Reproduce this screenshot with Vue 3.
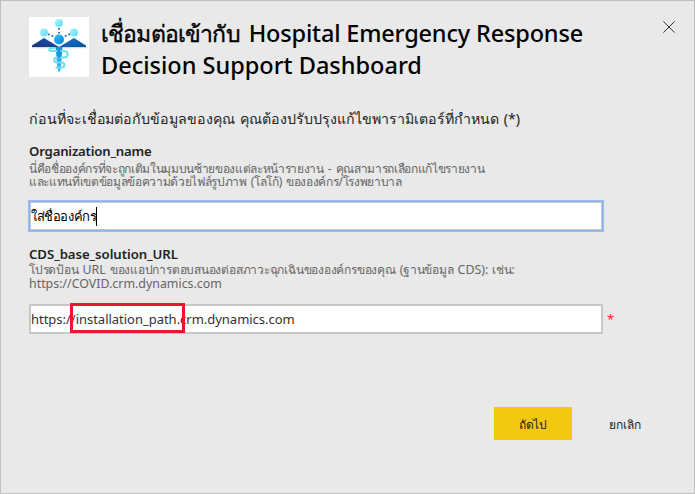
<script setup>
import { ref } from 'vue'
const organization = ref('ใส่ชื่อองค์กร')
const url = ref('https://installation_path.crm.dynamics.com')
</script>

<template>
  <main class="dialog">
    <header class="head">
      <svg class="logo" viewBox="0 0 60 60">
        <defs>
          <linearGradient id="wingL" x1="0" y1="1" x2="1" y2="0"><stop offset="0" stop-color="#1b2f7c" /><stop offset="1" stop-color="#1559ae" /></linearGradient>
          <linearGradient id="wingR" x1="0" y1="0" x2="1" y2="1"><stop offset="0" stop-color="#1275cc" /><stop offset="1" stop-color="#0b4f9c" /></linearGradient>
          <linearGradient id="ball" x1="0" y1="0" x2="1" y2="1"><stop offset="0" stop-color="#35c0f2" /><stop offset="1" stop-color="#0a83dc" /></linearGradient>
          <linearGradient id="pale" x1="0" y1="0" x2="1" y2="1"><stop offset="0" stop-color="#a5f5ff" /><stop offset="1" stop-color="#62d9f5" /></linearGradient>
          <linearGradient id="staff" x1="0" y1="0" x2="0" y2="1"><stop offset="0" stop-color="#168fe0" /><stop offset="1" stop-color="#42c3f4" /></linearGradient>
        </defs>
        <rect width="60" height="60" fill="#fff" />
        <path d="M3 30.500H57" stroke="#d5dbe3" stroke-width="1.500" />
        <path d="M26.500 30h7l-1.700 22-1.800 4-1.500-4z" fill="url(#staff)" />
        <path d="M25 31h-2c-3.500 0-3.500 3 0 3h11.500c5.500 0 5.500 6.500 0 6.500h-6.500c-3.500 0-3.500 5 0 5h4.500c4 0 4 5 0 5h-5" fill="none" stroke="#6fe0ef" stroke-width="2.200" stroke-linecap="round" />
        <path d="M28.300 30h3.400l-.6 11h-2z" fill="#1b92e2" />
        <path d="M3 30V28.500L15 21l15 9z" fill="url(#wingL)" />
        <path d="M57 30V28.500L45 21l-15 9z" fill="url(#wingR)" />
        <path d="M30 11v6M19 17l7 3M41 17l-7 3" stroke="#1260ac" stroke-width="1.700" stroke-dasharray="1.700 2.200" />
        <circle cx="30" cy="6" r="4" fill="url(#pale)" />
        <circle cx="15" cy="15.500" r="4" fill="url(#pale)" />
        <circle cx="45" cy="15.500" r="4" fill="url(#pale)" />
        <circle cx="30" cy="22.500" r="5" fill="url(#ball)" />
      </svg>
      <h1 class="title">
        <span class="row"><span class="t-th">เชื่อมต่อเข้ากับ</span><span class="t-en">Hospital Emergency Response</span></span>
        <span class="row"><span>Decision Support Dashboard</span></span>
      </h1>
      <svg class="close" viewBox="0 0 12 12"><path d="M.4.4l11.200 11.200M11.600.4L.4 11.600" stroke="#333" stroke-width="1" /></svg>
    </header>
    <p class="intro"><span class="i1">ก่อนที่จะเชื่อมต่อกับข้อมูลของคุณ</span><span>คุณต้องปรับปรุงแก้ไขพารามิเตอร์ที่กำหนด</span><span>(*)</span></p>
    <section class="param">
      <h2 class="name">Organization_name</h2>
      <p class="desc"><span class="th">นี่คือชื่อองค์กรที่จะถูกเติมในมุมบนซ้ายของแต่ละหน้ารายงาน</span><span>-</span><span class="th">คุณสามารถเลือกแก้ไขรายงาน</span></p>
      <p class="desc"><span class="th">และแทนที่เขตข้อมูลข้อความด้วยไฟล์รูปภาพ</span><span class="th">(โลโก้)</span><span class="th">ขององค์กร/โรงพยาบาล</span></p>
      <div class="field focused"><span class="v1">{{ organization }}</span><i class="caret"></i></div>
    </section>
    <section class="param second">
      <h2 class="name">CDS_base_solution_URL</h2>
      <p class="desc"><span class="th">โปรดป้อน</span><span class="en">URL</span><span class="th">ของแอปการตอบสนองต่อสภาวะฉุกเฉินขององค์กรของคุณ</span><span class="th">(ฐานข้อมูล</span><span class="en">CDS):</span><span class="th">เช่น:</span></p>
      <p class="desc"><span class="en">https://COVID.crm.dynamics.com</span></p>
      <div class="line">
        <div class="field"><span class="v2">{{ url }}</span><i class="mark"></i></div>
        <span class="star">*</span>
      </div>
    </section>
    <footer class="foot">
      <button class="btn primary">ถัดไป</button>
      <button class="btn">ยกเลิก</button>
    </footer>
  </main>
</template>

<style>
body { margin: 0; }
</style>
<style scoped>
.dialog { box-sizing: border-box; width: 695px; height: 494px; background: #e9e9e9; border: 1px solid #bfbfbf; padding: 16px 18px 0 28px; font-family: "Noto Sans", "Liberation Sans", sans-serif; color: #222; overflow: hidden; white-space: nowrap; }
h1, h2, p { margin: 0; }
.head { display: flex; height: 60px; }
.logo { width: 60px; height: 60px; flex: none; }
.title { margin-left: 12px; flex: 1; font-size: 23.5px; font-weight: 500; line-height: 32px; color: #000; }
.row { display: flex; gap: 9px; height: 32px; }
.t-th { font-size: 23px; letter-spacing: -.85px; -webkit-text-stroke: .4px #000; }
.t-en { letter-spacing: -.17px; }
.close { width: 12px; height: 12px; margin: 4px 1px 0 0; overflow: visible; }
.intro { display: flex; gap: 5px; height: 24px; margin-top: 30px; line-height: 24px; font-size: 14.2px; color: #222; }
.i1 { letter-spacing: -.06px; }
.param { margin-top: 12px; }
.name { font-size: 13.2px; font-weight: 600; letter-spacing: -.2px; line-height: 17px; height: 19px; color: #222; }
.desc { display: flex; gap: 4px; height: 13px; line-height: 13px; font-size: 12px; color: #666; }
.th { letter-spacing: -.33px; }
.en { font-size: 12.4px; }
.field { box-sizing: border-box; position: relative; display: flex; align-items: center; width: 574px; height: 30px; background: #fff; border: 2px solid #c8c8c8; font-size: 13px; color: #333; }
.focused { margin-top: 13px; border: 1px solid #8db1ee; padding-left: 1px; box-shadow: 0 0 0 1px #9bbdf5, inset 0 0 0 1px #c6c6c6; color: #000; }
.v1 { letter-spacing: -.4px; }
.v2 { letter-spacing: -.02px; }
.caret { width: 1px; height: 19px; background: #000; }
.second { margin-top: 13px; }
.second .name { letter-spacing: -.06px; line-height: 20px; }
.second .th { letter-spacing: -.22px; }
.second .desc + .desc { line-height: 15px; }
.line { display: flex; margin-top: 15px; }
.mark { position: absolute; left: 39px; top: -3px; width: 109px; height: 24px; border: 3px solid #f0142f; }
.star { margin: 5px 0 0 4px; font-size: 13px; line-height: 20px; color: #f22; }
.foot { display: flex; margin: 73px 0 0 465px; }
.btn { flex: none; font: 500 12px/35px "Noto Sans", sans-serif; width: 78px; height: 33px; padding: 0; border: 0; background: none; color: #222; margin-right: 14px; }
.primary { background: #f2c811; letter-spacing: -.4px; }
</style>
